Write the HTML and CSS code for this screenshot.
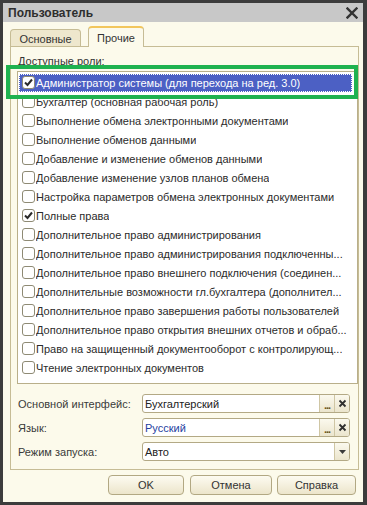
FILE: index.html
```html
<!DOCTYPE html>
<html lang="ru">
<head>
<meta charset="utf-8">
<title>Пользователь</title>
<link rel="stylesheet" href="styles.css">
</head>
<body>
<div class="window">
  <div class="titlebar">
    <span class="title">Пользователь</span>
    <svg class="close" width="12" height="12" viewBox="0 0 12 12"><path d="M1.5 1.5 L10.5 10.5 M10.5 1.5 L1.5 10.5" stroke="#333" stroke-width="2.4" stroke-linecap="square"/></svg>
  </div>
  <div class="body">
    <div class="tabs">
      <div class="tab">Основные</div>
      <div class="tab active">Прочие</div>
    </div>
    <div class="panel">
      <div class="roles-label">Доступные роли:</div>
      <div class="list">
        <div class="row selected"><div class="sel"><span class="cb checked"><svg width="11" height="11" viewBox="0 0 11 11"><path d="M2 5.5 L4.5 8 L9 2.5" fill="none" stroke="#2a2a2a" stroke-width="2"/></svg></span><span class="txt">Администратор системы (для перехода на ред. 3.0)</span></div></div>
        <div class="row"><span class="cb"></span><span class="txt">Бухгалтер (основная рабочая роль)</span></div>
        <div class="row"><span class="cb"></span><span class="txt">Выполнение обмена электронными документами</span></div>
        <div class="row"><span class="cb"></span><span class="txt">Выполнение обменов данными</span></div>
        <div class="row"><span class="cb"></span><span class="txt">Добавление и изменение обменов данными</span></div>
        <div class="row"><span class="cb"></span><span class="txt">Добавление изменение узлов планов обмена</span></div>
        <div class="row"><span class="cb"></span><span class="txt">Настройка параметров обмена электронных документами</span></div>
        <div class="row"><span class="cb checked"><svg width="11" height="11" viewBox="0 0 11 11"><path d="M2 5.5 L4.5 8 L9 2.5" fill="none" stroke="#2a2a2a" stroke-width="2"/></svg></span><span class="txt">Полные права</span></div>
        <div class="row"><span class="cb"></span><span class="txt">Дополнительное право администрирования</span></div>
        <div class="row"><span class="cb"></span><span class="txt">Дополнительное право администрирования подключенны...</span></div>
        <div class="row"><span class="cb"></span><span class="txt">Дополнительное право внешнего подключения (соединен...</span></div>
        <div class="row"><span class="cb"></span><span class="txt">Дополнительные возможности гл.бухгалтера (дополнител...</span></div>
        <div class="row"><span class="cb"></span><span class="txt">Дополнительное право завершения работы пользователей</span></div>
        <div class="row"><span class="cb"></span><span class="txt">Дополнительное право открытия внешних отчетов и обраб...</span></div>
        <div class="row"><span class="cb"></span><span class="txt">Право на защищенный документооборот с контролирующ...</span></div>
        <div class="row"><span class="cb"></span><span class="txt">Чтение электронных документов</span></div>
      </div>
      <div class="form">
        <div class="frow">
          <span class="flabel">Основной интерфейс:</span>
          <div class="field"><span class="fval">Бухгалтерский</span><span class="fbtn dots">...</span><span class="fbtn clr"><svg width="9" height="9" viewBox="0 0 9 9"><path d="M1.5 1.5 L7.5 7.5 M7.5 1.5 L1.5 7.5" stroke="#2f2f2f" stroke-width="1.8"/></svg></span></div>
        </div>
        <div class="frow">
          <span class="flabel">Язык:</span>
          <div class="field"><span class="fval blue">Русский</span><span class="fbtn dots">...</span><span class="fbtn clr"><svg width="9" height="9" viewBox="0 0 9 9"><path d="M1.5 1.5 L7.5 7.5 M7.5 1.5 L1.5 7.5" stroke="#2f2f2f" stroke-width="1.8"/></svg></span></div>
        </div>
        <div class="frow">
          <span class="flabel">Режим запуска:</span>
          <div class="field"><span class="fval">Авто</span><span class="fbtn drop"><svg width="9" height="6" viewBox="0 0 9 6"><path d="M1 1 L8 1 L4.5 5 Z" fill="#3a3a3a"/></svg></span></div>
        </div>
      </div>
    </div>
    <div class="buttons">
      <div class="btn ok">OK</div>
      <div class="btn cancel">Отмена</div>
      <div class="btn help">Справка</div>
    </div>
  </div>
  <div class="highlight"></div>
</div>
</body>
</html>
```

FILE: styles.css
```css
* { box-sizing: border-box; }
html, body { margin: 0; padding: 0; background: #3d3d3d; }
body { font-family: "Liberation Sans", Arial, sans-serif; font-size: 11px; color: #2b2b2b; }

.window {
  position: relative;
  width: 367px;
  height: 505px;
  background: #3c3c3c;
  padding: 3px 4px 3px 3px;
  display: flex;
  flex-direction: column;
}

.titlebar {
  height: 19px;
  background: #c8c8c8;
  display: flex;
  align-items: center;
  justify-content: space-between;
  padding: 0 5px 0 5px;
}
.title { font-weight: bold; font-size: 12px; color: #2e2e2e; }
.close { display: block; }

.body {
  flex: 1;
  background: #fcfaeb;
  padding: 5px 7px 0 7px;
  display: flex;
  flex-direction: column;
}

.tabs {
  height: 19px;
  display: flex;
  align-items: flex-end;
  position: relative;
  z-index: 2;
}
.tab {
  height: 17px;
  width: 71px;
  margin-right: 7px;
  background: #eee7cd;
  border: 1px solid #c6bc95;
  border-bottom: none;
  border-radius: 4px 4px 0 0;
  display: flex;
  align-items: center;
  justify-content: center;
  color: #333;
  padding-top: 1px;
}
.tab.active {
  width: 56px;
  height: 21px;
  margin-bottom: -1px;
  background: #fcfaeb;
  border-top: 2px solid #f2c65c;
  padding-top: 0;
}

.panel {
  width: 349px;
  height: 424px;
  border: 1px solid #c6bc95;
  padding: 7px 1px 0 6px;
  display: flex;
  flex-direction: column;
}
.roles-label { height: 14px; line-height: 14px; padding-left: 1px; color: #333; }

.list {
  margin-top: 3px;
  width: 341px;
  height: 313px;
  background: #ffffff;
  border: 1px solid #b9af8a;
  padding-top: 1px;
  overflow: hidden;
}
.row {
  height: 19px;
  display: flex;
  align-items: center;
  padding-left: 4px;
  white-space: nowrap;
  color: #2b2b2b;
}
.row.selected { padding-left: 1px; padding-right: 5px; }
.sel {
  flex: 1;
  height: 18px;
  background: #4c60c4;
  border: 1px dotted #ffffff;
  display: flex;
  align-items: center;
  padding-left: 2px;
  color: #ffffff;
}
.cb {
  width: 13px;
  height: 13px;
  flex: none;
  border: 1px solid #8e8a74;
  border-radius: 3px;
  background: #ffffff;
  margin-right: 1px;
  display: flex;
  align-items: center;
  justify-content: center;
}
.cb svg { display: block; }
.txt { overflow: hidden; }

.form {
  margin-top: 10px;
  display: flex;
  flex-direction: column;
  gap: 5px;
}
.frow { height: 19px; display: flex; align-items: center; }
.flabel { width: 125px; padding-left: 1px; color: #3a3a3a; }
.field {
  width: 208px;
  height: 19px;
  background: #ffffff;
  border: 1px solid #b3a985;
  border-radius: 3px;
  display: flex;
  align-items: stretch;
  overflow: hidden;
}
.fval { flex: 1; padding-left: 2px; display: flex; align-items: center; color: #222; }
.fval.blue { color: #1f3f9f; }
.fbtn {
  width: 15px;
  flex: none;
  background: linear-gradient(#fbf9ee, #ebe5cd);
  border-left: 1px solid #cfc6a4;
  display: flex;
  align-items: center;
  justify-content: center;
}
.fbtn.dots { align-items: flex-end; font-weight: bold; color: #6b5420; line-height: 13px; font-size: 11px; letter-spacing: -1px; }
.fbtn.drop { width: 15px; }

.buttons {
  margin-top: 5px;
  display: flex;
  justify-content: flex-end;
  padding-right: 0;
}
.btn {
  height: 20px;
  border: 1px solid #b2a883;
  border-radius: 4px;
  background: linear-gradient(#fdfbf1, #ece5cb);
  display: flex;
  align-items: center;
  justify-content: center;
  color: #333;
}
.btn.ok { width: 76px; margin-right: 6px; }
.btn.cancel { width: 82px; margin-right: 5px; }
.btn.help { width: 79px; }

.highlight {
  position: absolute;
  left: 6px;
  top: 65px;
  width: 352px;
  height: 34px;
  border: 4px solid #1fb24f;
  pointer-events: none;
}
```
